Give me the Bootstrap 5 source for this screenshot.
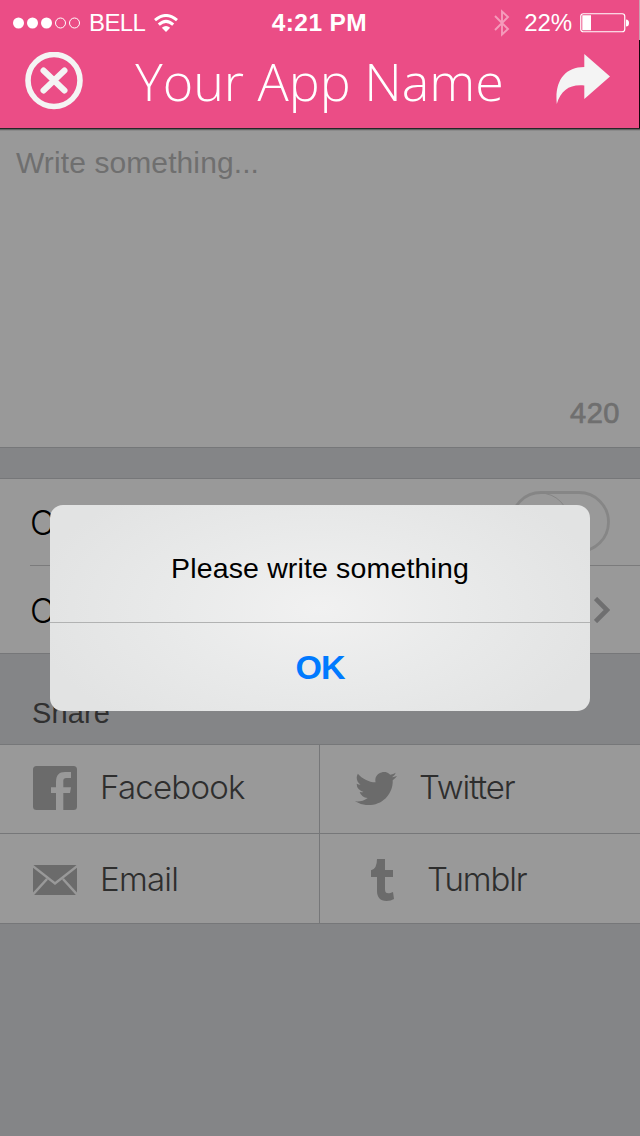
<!DOCTYPE html>
<html lang="en">
<head>
<meta charset="utf-8">
<meta name="viewport" content="width=device-width, initial-scale=1">
<title>Your App Name</title>
<link href="https://cdn.jsdelivr.net/npm/bootstrap@5.3.0/dist/css/bootstrap.min.css" rel="stylesheet">
<style>
  body { background: #848587; font-family: "Liberation Sans", Arial, sans-serif; color: #000; overflow: hidden; }
  svg { display: block; flex: none; }
  .screen { width: 640px; height: 1136px; }
  .topbar { height: 128px; background: linear-gradient(#c9a0b0 40px, #17060d 40px) right / 1px 100% no-repeat #eb4d86; color: #fff; padding-right: 1px; }
  .status { height: 45px; font-size: 24px; line-height: 45px; }
  .status > div { width: 33.333%; }
  .carrier { margin: 0 9px 0 8px; letter-spacing: -.6px; }
  .clock { font-size: 24.500px; letter-spacing: .4px; }
  .percent { margin: 0 8px 0 14px; letter-spacing: -.1px; }
  .titlebar { height: 72px; padding: 0 29px 0 25px; }
  .app-title { font: 300 52px/72px "Open Sans", sans-serif; }
  .compose { height: 320px; background: #999; border-top: 1px solid #262626; border-bottom: 1px solid #767779; box-shadow: inset 0 1px #626262, inset 0 2px #8a8a8a; color: #6f6f6f; padding: 14px 20px 14px 16px; }
  .hint { font-size: 30px; line-height: 40px; letter-spacing: .1px; }
  .count { font-size: 29px; line-height: 40px; -webkit-text-stroke: .7px #6f6f6f; letter-spacing: .5px; }
  .light { font-family: Inter, "Liberation Sans", sans-serif; font-weight: 300; font-size: 33px; }
  .options { margin-top: 30px; background: #999; border-top: 1px solid #767779; border-bottom: 1px solid #767779; padding-left: 30px; font-size: 34px; }
  .option { height: 86px; padding-right: 30px; }
  .option + .option { border-top: 1px solid #7b7b7c; height: 88px; }
  .option span { padding-top: 1px; }
  .share-label { height: 90px; padding: 39px 0 0 32px; font-size: 29px; line-height: 40px; color: #303030; letter-spacing: .1px; }
  .share-grid { background: #999; border-top: 1px solid #767779; }
  .cell { height: 89px; border-bottom: 1px solid #767779; padding-bottom: 2px; color: #2e2e2e; line-height: 80px; }
  .cell.tall { height: 90px; padding-top: 2px; padding-bottom: 0; }
  .cell.first { width: 320px; border-right: 1px solid #767779; padding-left: 33px; }
  .cell svg { fill: #6b6b6b; }
  .cell span { position: relative; top: -1px; }
  .name-fb, .name-em { margin-left: 23px; letter-spacing: -.75px; }
  .tw { padding-left: 35px; }
  .name-tw { margin-left: 22px; letter-spacing: -1.1px; }
  .tb { padding-left: 51px; }
  .name-tb { margin-left: 33px; letter-spacing: -1.1px; }
  .alert-layer { position: absolute; left: 50px; top: 505px; width: 540px; height: 206px; border-radius: 13px; overflow: hidden;
    background: radial-gradient(ellipse 290px 150px at 50% 50%, #f1f1f1, #e9eaea 50%, #e2e3e3 100%); }
  .message { height: 117px; font-size: 28.500px; line-height: 127px; letter-spacing: .15px; }
  .ok { height: 89px; border: 0; border-top: 1px solid #b1b2b2; background: none; color: #007aff; font-size: 34px; line-height: 88px; font-weight: 700; letter-spacing: -1px; }
</style>
</head>
<body>
<main class="screen position-relative">
  <header class="topbar">
    <div class="status d-flex">
      <div class="d-flex align-items-center">
        <svg class="ms-2" width="73" height="12" viewBox="8 0 73 12"><g fill="#fff"><circle cx="18.5" cy="6" r="5.5"/><circle cx="32.5" cy="6" r="5.5"/><circle cx="46.5" cy="6" r="5.5"/></g><g fill="none" stroke="#fff"><circle cx="60.5" cy="6" r="5"/><circle cx="74.5" cy="6" r="5"/></g></svg>
        <span class="carrier">BELL</span>
        <svg width="24" height="18" viewBox="0 0 24 18"><g fill="none" stroke="#fff" stroke-width="3"><path d="M1 6.200Q12-3.200 23 6.200"/><path d="M4.800 10.700Q12 4 19.200 10.700"/></g><path fill="#fff" d="M7.800 13.800Q12 10 16.200 13.800L12 18z"/></svg>
      </div>
      <div class="text-center fw-bold clock">4:21 PM</div>
      <div class="d-flex align-items-center justify-content-end">
        <svg width="16" height="28" viewBox="0 0 16 28" fill="none" stroke="#f59bbb" stroke-width="1.900"><path d="M1 7L14 20L8 25.500V2.500L14 8L1 21"/></svg>
        <span class="percent">22%</span>
        <svg width="59" height="20" viewBox="0 0 59 20"><rect x=".75" y=".75" width="44" height="18" rx="2.500" fill="none" stroke="#fff" stroke-width="1.200"/><path fill="#fff" d="M2.300 2.300H11V17.200H2.300zM46 6.500Q49 6.500 49 10T46 13.500z"/></svg>
      </div>
    </div>
    <div class="titlebar d-flex align-items-center justify-content-between">
      <svg width="58" height="58" viewBox="0 0 58 58" fill="none" stroke="#f4f4f4"><circle cx="29" cy="28.500" r="26" stroke-width="5.600"/><path d="M18.500 18.500L39.500 38.500M39.500 18.500L18.500 38.500" stroke-width="6" stroke-linecap="round"/></svg>
      <span class="app-title">Your App Name</span>
      <svg width="54" height="54" viewBox="0 0 54 54"><path fill="#f4f4f4" d="M28.300 0L54 22.500L28.300 45V31.500C14 30 5 36 .8 50C-1.500 28 8 13 28.300 13z"/></svg>
    </div>
  </header>

  <section class="compose d-flex flex-column justify-content-between">
    <div class="hint">Write something...</div>
    <div class="count text-end">420</div>
  </section>

  <section class="options light">
    <div class="option d-flex align-items-center justify-content-between">
      <span>C</span>
      <svg width="100" height="62" viewBox="0 0 100 62" fill="none" stroke="#868686"><rect x="1.500" y="1.500" width="97" height="59" rx="29.500" stroke-width="2.800"/><circle cx="30" cy="31" r="29" stroke="#858585"/></svg>
    </div>
    <div class="option d-flex align-items-center justify-content-between">
      <span>C</span>
      <svg width="16" height="26" viewBox="0 0 16 26" fill="none" stroke="#6f6f70" stroke-width="4.600"><path d="M1.500 1.500L13 13L1.500 24.500"/></svg>
    </div>
  </section>

  <div class="share-label">Share</div>

  <section class="share-grid light">
    <div class="d-flex">
      <div class="cell first d-flex align-items-center">
        <svg width="44" height="44" viewBox="0 0 44 44"><rect width="44" height="44" rx="3.500"/><path fill="#999" d="M23 44V27H18V21.300H23V16C23 9 26 6 32 6H38V12H34C31 12 30.300 13 30.300 15.500V21.300H38L37 27H30.300V44z"/></svg>
        <span class="name-fb">Facebook</span>
      </div>
      <div class="cell d-flex flex-fill align-items-center tw">
        <svg width="42" height="33" viewBox="0 2.200 24 19.500" preserveAspectRatio="none"><path d="M23.953 4.570a10 10 0 01-2.825.775 4.958 4.958 0 002.163-2.723c-.951.555-2.005.959-3.127 1.184a4.920 4.920 0 00-8.384 4.482C7.690 8.095 4.067 6.130 1.640 3.162a4.822 4.822 0 00-.666 2.475c0 1.710.870 3.213 2.188 4.096a4.904 4.904 0 01-2.228-.616v.060a4.923 4.923 0 003.946 4.827 4.996 4.996 0 01-2.212.085 4.936 4.936 0 004.604 3.417 9.867 9.867 0 01-6.102 2.105c-.390 0-.779-.023-1.170-.067a13.995 13.995 0 007.557 2.209c9.053 0 13.998-7.496 13.998-13.985 0-.210 0-.420-.015-.630A9.935 9.935 0 0024 4.590z"/></svg>
        <span class="name-tw">Twitter</span>
      </div>
    </div>
    <div class="d-flex">
      <div class="cell tall first d-flex align-items-center">
        <svg width="44" height="30" viewBox="0 0 44 30"><path d="M0 0H44V30H0z"/><path d="M-1 .500L22 18.500L45 .500M-1 30.500L14 14M45 30.500L30 14" fill="none" stroke="#999" stroke-width="2.500"/></svg>
        <span class="name-em">Email</span>
      </div>
      <div class="cell tall d-flex flex-fill align-items-center tb">
        <svg width="23" height="42" viewBox="0 0 23 42"><path d="M6 0H14V11H22V18H14V30.500C14 34.500 17 35.500 22 33L23 40Q20 42 15.500 42C9 42 6 38 6 32V18H0V11.300Q6 10 6 0z"/></svg>
        <span class="name-tb">Tumblr</span>
      </div>
    </div>
  </section>

  <div class="alert-layer text-center" role="alertdialog">
    <div class="message">Please write something</div>
    <button class="ok d-block w-100 p-0">OK</button>
  </div>
</main>
<script src="https://cdn.jsdelivr.net/npm/bootstrap@5.3.0/dist/js/bootstrap.bundle.min.js"></script>
</body>
</html>
